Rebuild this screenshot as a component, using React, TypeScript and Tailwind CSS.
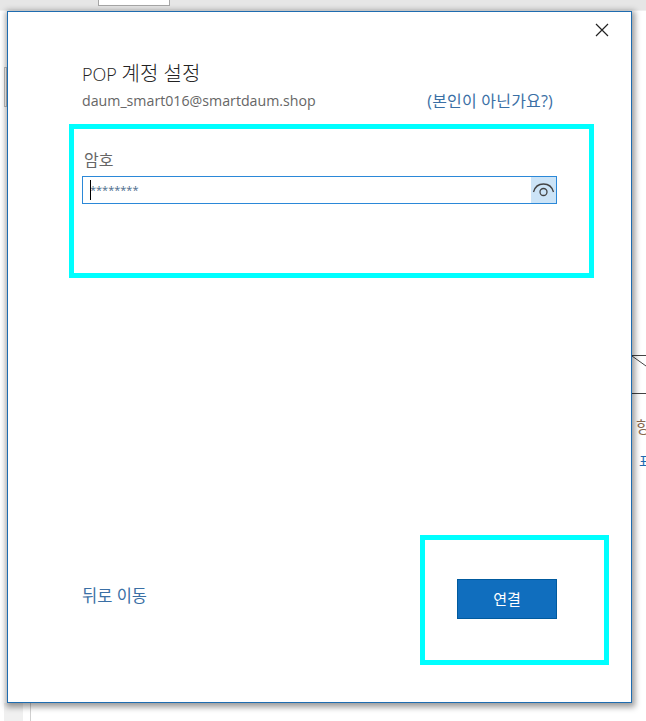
import React from 'react';

const App: React.FC = () => {
  return (
    <div className="relative h-[721px] w-[646px] overflow-hidden bg-white font-['Open_Sans','Noto_Sans_CJK_KR',sans-serif]">
      {/* window behind the dialog */}
      <div className="h-[11px] border-b border-[#f0f0f0] bg-[#e6e6e6]">
        <div className="ml-[98px] h-[6px] w-[72px] border-x border-b border-[#a6a6a6] bg-white"></div>
      </div>
      <div className="absolute inset-y-0 left-0 top-[11px] flex w-[31px] flex-col">
        <div className="mt-[56px] ml-[4px] h-[40px] w-[3px] border border-[#c0c0c0]"></div>
        <div className="mt-auto flex h-[18px] gap-[7px] pl-[4px]">
          <div className="w-[19px] bg-[#f0f0f0]"></div>
          <div className="w-px bg-[#d0d0d0]"></div>
        </div>
      </div>
      <div className="absolute left-[632px] top-[355px] flex w-[14px] flex-col overflow-hidden">
        <div className="h-[39px] border-y border-[#444444]">
          <svg width="14" height="37" viewBox="0 0 14 37" fill="none">
            <path d="M0 0 L14 10" stroke="#444444" strokeWidth="1" />
          </svg>
        </div>
        <div className="mt-[22px] ml-[4px] whitespace-nowrap text-[16px] leading-[22px] text-[#8a6a50]">항</div>
        <div className="mt-[13px] ml-[7px] whitespace-nowrap text-[14px] leading-[20px] text-[#1e6ab0]">표</div>
      </div>

      {/* dialog */}
      <div className="absolute left-[7px] top-[11px] flex h-[692px] w-[625px] flex-col border border-[#1e6cb0] bg-white px-[74px] shadow-[1px_2px_6px_2px_rgba(0,0,0,0.4)]">
        <button className="absolute right-[22px] top-[11px] text-[#222222]" aria-label="닫기">
          <svg width="14" height="14" viewBox="0 0 14 14" fill="none" stroke="currentColor" strokeWidth="1.2">
            <path d="M1 1 L13 13 M13 1 L1 13" />
          </svg>
        </button>
        <h1 className="mt-[49px] text-[18px] font-light leading-[26px] text-[#222222]">
          POP <span className="text-[20px]">계정 설정</span>
        </h1>
        <div className="mt-[4px] flex items-center justify-between text-[14.2px] leading-[20px]">
          <span className="text-[#666666]">daum_smart016@smartdaum.shop</span>
          <a className="mr-[4px] text-[16px] tracking-[0.2px] text-[#3a6fa5]">(본인이 아닌가요?)</a>
        </div>
        <label className="mt-[39px] pl-[2px] text-[16px] leading-[20px] text-[#666666]">암호</label>
        <div className="mt-[6px] flex h-[28px] items-center border border-[#2b88d8]">
          <div className="relative flex h-full flex-1 items-center pl-[7px] text-[11px] text-[#4a6a8a]">
            <span className="absolute left-[7px] top-[3px] h-[20px] w-px bg-black"></span>
            ********
          </div>
          <div className="flex h-full w-[25px] items-center justify-center bg-[#cce4f7]">
            <svg width="23" height="16" viewBox="0 0 23 16" fill="none" stroke="#444444" strokeWidth="1.3">
              <path d="M1.5 10 C3 4.5 7 2 11.5 2 C16 2 20 4.5 21.5 10" />
              <circle cx="11.5" cy="10" r="3.5" />
            </svg>
          </div>
        </div>
        <div className="mt-auto mb-[83px] flex items-center justify-between">
          <a className="-mt-[6px] text-[16.5px] leading-[20px] text-[#3a6fa5]">뒤로 이동</a>
          <button className="h-[40px] w-[100px] border border-[#005a9e] bg-[#106ebe] text-[15px] text-white">연결</button>
        </div>
      </div>

      {/* highlight boxes */}
      <div className="absolute left-[69px] top-[124px] h-[154px] w-[525px] border-[5px] border-[#00ffff]"></div>
      <div className="absolute left-[420px] top-[535px] h-[130px] w-[189px] border-[5px] border-[#00ffff]"></div>
    </div>
  );
};

export default App;
